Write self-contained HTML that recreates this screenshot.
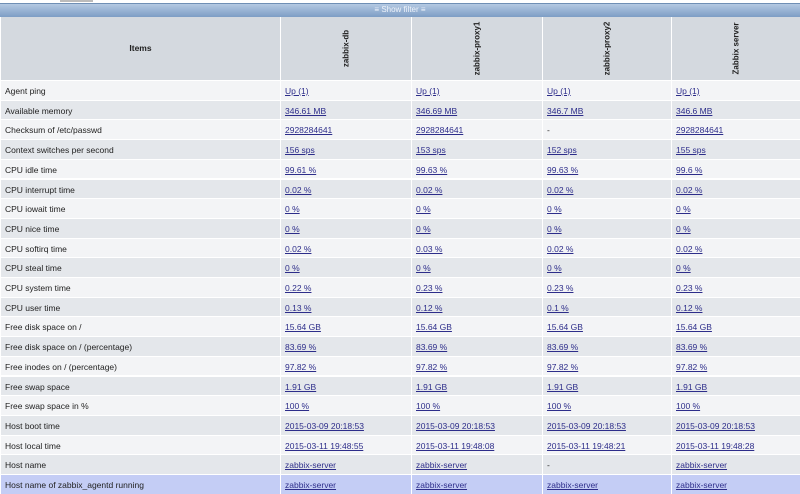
<!DOCTYPE html>
<html><head><style>
body{margin:0;width:800px;height:493px;overflow:hidden;background:#fff;font-family:"Liberation Sans",sans-serif;font-size:8.5px;color:#222;position:relative}
.bar{position:absolute;left:0;top:3px;width:800px;height:13px;background:linear-gradient(#b4c9e2,#7d9dc5);border-top:1px solid #6f8fb5;color:#eef3fa;text-align:center;font-size:8px;line-height:12px}
.c{position:absolute;box-sizing:border-box;padding-left:4px;white-space:nowrap;overflow:hidden}
.h{background:#d4d9df}
a{color:#2d2d8a;text-decoration:underline}
.vt{position:absolute;transform:rotate(-90deg);transform-origin:center;font-weight:bold;font-size:8px;color:#222;white-space:nowrap}
</style></head><body>
<div style="position:absolute;left:60px;top:0;width:33px;height:2px;background:#bbb"></div>
<div class="bar">≡ Show filter ≡</div>
<div id="t"></div>
<script>
(function(){
var cols=[[1,279],[281,130],[412,130],[543,128],[672,128]];
var hosts=["zabbix-db","zabbix-proxy1","zabbix-proxy2","Zabbix server"];
var h='';
h+='<div class="c h" style="left:1px;top:17px;width:279px;height:63px;text-align:center;line-height:63px;font-weight:bold;padding:0">Items</div>';
for(var j=0;j<4;j++){var c=cols[j+1];h+='<div class="c h" style="left:'+c[0]+'px;top:17px;width:'+c[1]+'px;height:63px"><div class="vt" style="left:'+(c[1]/2-40)+'px;top:27px;width:80px;text-align:center">'+hosts[j]+'</div></div>';}
var rows=[["Agent ping","Up (1)","Up (1)","Up (1)","Up (1)"],
["Available memory","346.61 MB","346.69 MB","346.7 MB","346.6 MB"],
["Checksum of /etc/passwd","2928284641","2928284641","-","2928284641"],
["Context switches per second","156 sps","153 sps","152 sps","155 sps"],
["CPU idle time","99.61 %","99.63 %","99.63 %","99.6 %"],
["CPU interrupt time","0.02 %","0.02 %","0.02 %","0.02 %"],
["CPU iowait time","0 %","0 %","0 %","0 %"],
["CPU nice time","0 %","0 %","0 %","0 %"],
["CPU softirq time","0.02 %","0.03 %","0.02 %","0.02 %"],
["CPU steal time","0 %","0 %","0 %","0 %"],
["CPU system time","0.22 %","0.23 %","0.23 %","0.23 %"],
["CPU user time","0.13 %","0.12 %","0.1 %","0.12 %"],
["Free disk space on /","15.64 GB","15.64 GB","15.64 GB","15.64 GB"],
["Free disk space on / (percentage)","83.69 %","83.69 %","83.69 %","83.69 %"],
["Free inodes on / (percentage)","97.82 %","97.82 %","97.82 %","97.82 %"],
["Free swap space","1.91 GB","1.91 GB","1.91 GB","1.91 GB"],
["Free swap space in %","100 %","100 %","100 %","100 %"],
["Host boot time","2015-03-09 20:18:53","2015-03-09 20:18:53","2015-03-09 20:18:53","2015-03-09 20:18:53"],
["Host local time","2015-03-11 19:48:55","2015-03-11 19:48:08","2015-03-11 19:48:21","2015-03-11 19:48:28"],
["Host name","zabbix-server","zabbix-server","-","zabbix-server"],
["Host name of zabbix_agentd running","zabbix-server","zabbix-server","zabbix-server","zabbix-server"]];
for(var i=0;i<rows.length;i++){
 var ty=81+i*19.7, bg=i==20?'#c4cdf5':(i%2?'#e4e7eb':'#f3f4f6');
 for(var k=0;k<5;k++){var cc=cols[k],v=rows[i][k];
  h+='<div class="c" style="left:'+cc[0]+'px;top:'+ty+'px;width:'+cc[1]+'px;height:18.7px;line-height:20px;background:'+bg+'">'+(k&&v!='-'?'<a>'+v+'</a>':v)+'</div>';}
}
document.getElementById('t').innerHTML=h;
})();
</script>
</body></html>
